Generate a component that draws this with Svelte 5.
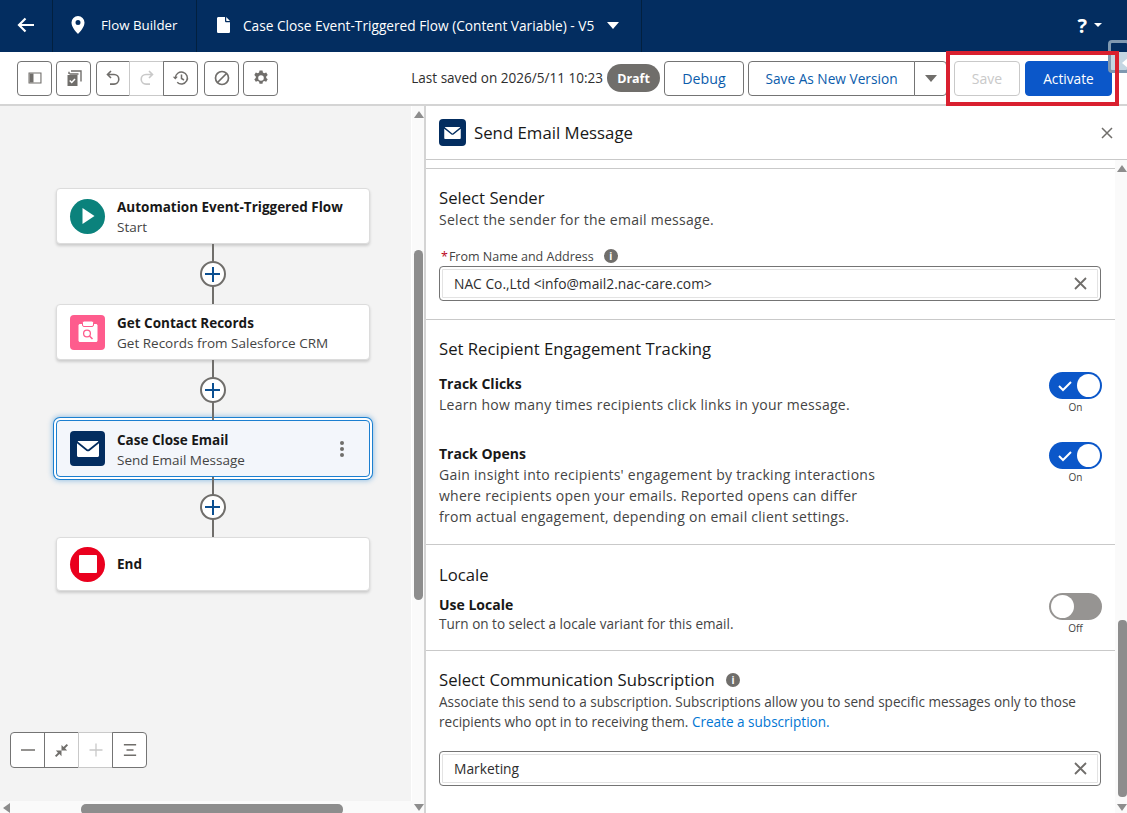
<script>
	const sections = {
		tracking: [
			{
				title: 'Track Clicks',
				lines: ['Learn how many times recipients click links in your message.']
			},
			{
				title: 'Track Opens',
				lines: [
					"Gain insight into recipients' engagement by tracking interactions",
					'where recipients open your emails. Reported opens can differ',
					'from actual engagement, depending on email client settings.'
				]
			}
		]
	};
</script>

<div class="page">
	<header class="topbar">
		<div class="cell back">
			<svg width="20" height="20" viewBox="0 0 20 20"><path d="M18 10H3M9.500 3.500 3 10l6.500 6.500" fill="none" stroke="#fff" stroke-width="2.200" /></svg>
		</div>
		<div class="cell builder">
			<svg width="14" height="18" viewBox="0 0 14 18"><path fill="#fff" fill-rule="evenodd" d="M7 0a6.500 6.500 0 0 0-6.500 6.500C.5 11 5 16 7 18c2-2 6.500-7 6.500-11.500A6.500 6.500 0 0 0 7 0Zm0 4a2.500 2.500 0 1 1 0 5 2.500 2.500 0 0 1 0-5Z" /></svg>
			<span>Flow Builder</span>
		</div>
		<div class="cell flowname">
			<svg width="13" height="16" viewBox="0 0 13 16"><path fill="#fff" d="M1.500 0H8v4c0 .8.600 1.300 1.300 1.300H13v9.400c0 .7-.6 1.300-1.300 1.300H1.500C.7 16 0 15.400 0 14.700V1.300C0 .6.700 0 1.500 0ZM9.200 0 13 4H9.700c-.3 0-.5-.2-.5-.5Z" /></svg>
			<span>Case Close Event-Triggered Flow (Content Variable) - V5</span>
			<i class="caret"></i>
		</div>
		<div class="help">
			<span>?</span>
			<i class="caret small"></i>
		</div>
	</header>

	<div class="toolbar">
		<div class="tools">
			<button class="tool">
				<svg width="16" height="16" viewBox="0 0 16 16"><path fill="#706e6b" d="M1.500 2.500h13v11h-13Zm1 1v9h10.900v-9Z" /><path fill="#706e6b" d="M2.500 3.500h4v9h-4z" /></svg>
			</button>
			<button class="tool">
				<svg width="20" height="20" viewBox="0 0 20 20"><path fill="none" stroke="#706e6b" stroke-width="1.400" d="M7 3h10v10.500" /><path fill="none" stroke="#706e6b" stroke-width="1.400" d="M5 6V3.800M14.500 6h-9" /><path fill="#706e6b" d="M3.500 7h10v11h-10z" /><path fill="none" stroke="#fff" stroke-width="1.500" d="m5.700 12.500 2 2 3.300-3.600" /></svg>
			</button>
			<div class="group">
				<button class="tool">
					<svg width="18" height="18" viewBox="0 0 18 18"><path fill="none" stroke="#706e6b" stroke-width="1.600" d="M7 2 3.500 5.500 7 9M3.500 5.500H10a4.800 4.800 0 0 1 0 9.600H6" /></svg>
				</button>
				<button class="tool off">
					<svg width="18" height="18" viewBox="0 0 18 18"><path fill="none" stroke="#c9c9c9" stroke-width="1.600" d="M11 2l3.500 3.500L11 9M14.500 5.500H8a4.800 4.800 0 0 0 0 9.600h4" /></svg>
				</button>
				<button class="tool">
					<svg width="18" height="18" viewBox="0 0 18 18"><path fill="none" stroke="#706e6b" stroke-width="1.500" d="M3.400 9a6 6 0 1 1 1.800 4.300M9.500 5.500v4l2.500 1.500" /><path fill="#706e6b" d="M.8 7.800h5L3.300 10.600Z" /></svg>
				</button>
			</div>
			<button class="tool">
				<svg width="18" height="18" viewBox="0 0 18 18"><circle cx="9" cy="9" r="6.500" fill="none" stroke="#706e6b" stroke-width="1.700" /><path stroke="#706e6b" stroke-width="1.700" d="M13.500 4.500l-9 9" /></svg>
			</button>
			<button class="tool">
				<svg width="18" height="18" viewBox="0 0 18 18"><path fill="#706e6b" fill-rule="evenodd" d="M7.500 1.500h3l.4 2 1.300.7 2-.7 1.500 2.600-1.500 1.300v1.500l1.500 1.300-1.500 2.600-2-.7-1.300.7-.4 2h-3l-.4-2-1.300-.7-2 .7-1.500-2.600 1.500-1.300V7.400L2.300 6.100l1.500-2.600 2 .7 1.300-.7ZM9 6.200a2.800 2.800 0 1 0 0 5.600 2.800 2.800 0 0 0 0-5.600Z" /></svg>
			</button>
		</div>

		<div class="spacer"></div>

		<span class="saved">Last saved on 2026/5/11 10:23</span>
		<span class="draft">Draft</span>
		<button class="btn debug">Debug</button>
		<div class="split">
			<button class="btn saveas">Save As New Version</button>
			<button class="btn more"><i class="caret grey"></i></button>
		</div>
		<div class="actions">
			<button class="btn save">Save</button>
			<button class="btn activate">Activate</button>
		</div>
	</div>

	<div class="body">
		<div class="canvas-wrap">
			<div class="canvas">
				<div class="node">
					<span class="ic round green"><svg width="14" height="18" viewBox="0 0 14 18"><path fill="#fff" d="M1.500 1l12 8-12 8Z" /></svg></span>
					<div class="txt">
						<b>Automation Event-Triggered Flow</b>
						<small>Start</small>
					</div>
				</div>
				<div class="link"><span class="plus"></span></div>
				<div class="node">
					<span class="ic pink">
						<svg width="22" height="24" viewBox="0 0 22 24"><path fill="#fff" d="M3 4h16c.8 0 1.500.7 1.500 1.500v15c0 .8-.7 1.500-1.500 1.500H3c-.8 0-1.500-.7-1.500-1.500v-15C1.500 4.700 2.200 4 3 4Z" /><rect x="5.500" y="1" width="11" height="5.500" rx="1.500" fill="#fff" stroke="#fe5c8d" stroke-width="1" /><circle cx="10" cy="13.500" r="3.400" fill="none" stroke="#fe5c8d" stroke-width="1.300" /><path stroke="#fe5c8d" stroke-width="1.500" d="m12.500 16 3 3" /></svg>
					</span>
					<div class="txt">
						<b>Get Contact Records</b>
						<small>Get Records from Salesforce CRM</small>
					</div>
				</div>
				<div class="link"><span class="plus"></span></div>
				<div class="node selected">
					<span class="ic navy">
						<svg width="22" height="16" viewBox="0 0 22 16"><path fill="#fff" d="M1.500 0h19c.4 0 .7.200.8.400L11.600 8.300c-.4.300-.9.300-1.300 0L.7.400C.8.200 1.100 0 1.500 0ZM0 2.300l9.600 7.600c.8.600 2 .6 2.800 0L22 2.300v12.200c0 .8-.7 1.500-1.500 1.500h-19C.7 16 0 15.300 0 14.500Z" /></svg>
					</span>
					<div class="txt">
						<b>Case Close Email</b>
						<small>Send Email Message</small>
					</div>
					<span class="dots"><i></i><i></i><i></i></span>
				</div>
				<div class="link"><span class="plus"></span></div>
				<div class="node end">
					<span class="ic round red"><span class="stop"></span></span>
					<div class="txt"><b>End</b></div>
				</div>
			</div>

			<div class="zoomer">
				<button><svg width="16" height="16" viewBox="0 0 16 16"><path stroke="#706e6b" stroke-width="1.500" d="M1 8h14" /></svg></button>
				<button><svg width="15" height="15" viewBox="0 0 16 16"><path fill="#706e6b" d="M2.500 15 1 13.500 4.200 10.300 2 8h6v6l-2.200-2.200ZM13.500 1 15 2.500 11.800 5.700 14 8H8V2l2.200 2.200Z" /></svg></button>
				<button class="off"><svg width="16" height="16" viewBox="0 0 16 16"><path stroke="#c9c9c9" stroke-width="1.300" d="M1.500 8h13M8 1.500v13" /></svg></button>
				<button><svg width="14" height="14" viewBox="0 0 16 16"><path stroke="#706e6b" stroke-width="1.700" d="M1 2h14M4 8h8M1 14h14" /></svg></button>
			</div>

			<div class="vbar"><i class="up"></i><span class="thumb"></span><i class="down"></i></div>
			<div class="hbar"><i class="left"></i><span class="thumb"></span></div>
		</div>

		<aside class="panel">
			<div class="panel-head">
				<span class="ic mini navy">
					<svg width="17" height="12" viewBox="0 0 22 16"><path fill="#fff" d="M1.500 0h19c.4 0 .7.200.8.400L11.600 8.300c-.4.300-.9.300-1.300 0L.7.400C.8.200 1.100 0 1.500 0ZM0 2.300l9.600 7.600c.8.600 2 .6 2.800 0L22 2.300v12.200c0 .8-.7 1.500-1.500 1.500h-19C.7 16 0 15.300 0 14.500Z" /></svg>
				</span>
				<h2>Send Email Message</h2>
				<svg class="close" width="12" height="12" viewBox="0 0 12 12"><path stroke="#706e6b" stroke-width="1.500" d="M1 1l10 10M11 1 1 11" /></svg>
			</div>

			<div class="panel-scroll">
				<div class="content">
					<section class="sender">
						<h3>Select Sender</h3>
						<p>Select the sender for the email message.</p>
						<label><em>*</em>From Name and Address <span class="info">i</span></label>
						<div class="field">
							<span>NAC Co.,Ltd &lt;info@mail2.nac-care.com&gt;</span>
							<svg width="13" height="13" viewBox="0 0 13 13"><path stroke="#706e6b" stroke-width="1.800" d="M1 1l11 11M12 1 1 12" /></svg>
						</div>
					</section>

					<section class="tracking">
						<h3>Set Recipient Engagement Tracking</h3>
						{#each sections.tracking as row}
							<div class="row">
								<div>
									<h4>{row.title}</h4>
									{#each row.lines as line}
										<p>{line}</p>
									{/each}
								</div>
								<div class="toggle-box">
									<span class="toggle on">
										<svg width="16" height="12" viewBox="0 0 16 12"><path fill="none" stroke="#fff" stroke-width="2" d="m2 6 4 4 8-8" /></svg>
										<i></i>
									</span>
									<small>On</small>
								</div>
							</div>
						{/each}
					</section>

					<section class="locale">
						<h3>Locale</h3>
						<div class="row">
							<div>
								<h4>Use Locale</h4>
								<p>Turn on to select a locale variant for this email.</p>
							</div>
							<div class="toggle-box">
								<span class="toggle"><i></i></span>
								<small>Off</small>
							</div>
						</div>
					</section>

					<section class="subscription">
						<h3>Select Communication Subscription <span class="info">i</span></h3>
						<p class="first">Associate this send to a subscription. Subscriptions allow you to send specific messages only to those</p>
						<p>recipients who opt in to receiving them. <a href="#sub">Create a subscription.</a></p>
						<div class="field wide">
							<span>Marketing</span>
							<svg width="13" height="13" viewBox="0 0 13 13"><path stroke="#706e6b" stroke-width="1.800" d="M1 1l11 11M12 1 1 12" /></svg>
						</div>
					</section>
				</div>
				<div class="pbar"><i class="up"></i><span class="thumb"></span><i class="down"></i></div>
			</div>
		</aside>
	</div>

	<div class="corner-tab"><i></i></div>
	<div class="highlight"></div>
</div>

<style>
	:global(body) {
		margin: 0;
		background: #fff;
		overflow: hidden;
	}

	.page {
		position: relative;
		width: 1127px;
		height: 813px;
		overflow: hidden;
		display: flex;
		flex-direction: column;
		font-family: 'Open Sans', 'Noto Sans', sans-serif;
		color: #181818;
		font-size: 13px;
	}

	button {
		font-family: inherit;
		padding: 0;
		margin: 0;
		background: #fff;
		cursor: pointer;
	}

	.topbar {
		height: 52px;
		flex: none;
		display: flex;
		align-items: stretch;
		background: #032d60;
		color: #fff;
	}

	.cell {
		display: flex;
		align-items: center;
		border-right: 1px solid #02203f;
		box-sizing: border-box;
		padding-bottom: 2px;
	}

	.back {
		width: 53px;
		padding-left: 16px;
	}

	.builder {
		width: 144px;
		padding-left: 18px;
		gap: 16px;
		font-size: 13.300px;
	}

	.flowname {
		width: 445px;
		padding-left: 20px;
		gap: 13px;
		font-size: 13.700px;
	}

	.caret {
		display: block;
		width: 0;
		height: 0;
		border-left: 6px solid transparent;
		border-right: 6px solid transparent;
		border-top: 7px solid #fff;
	}

	.caret.small {
		border-left-width: 4px;
		border-right-width: 4px;
		border-top-width: 4px;
		margin-left: 7px;
	}

	.caret.grey {
		border-top-color: #706e6b;
		border-left-width: 6px;
		border-right-width: 6px;
		border-top-width: 7px;
		margin: 0;
	}

	.help {
		margin-left: auto;
		display: flex;
		align-items: center;
		padding: 0 25px 2px 0;
		font-size: 20px;
		font-weight: 700;
	}

	.toolbar {
		height: 54px;
		flex: none;
		box-sizing: border-box;
		border-bottom: 2px solid #d4d4d4;
		display: flex;
		align-items: center;
		padding: 0 15px 0 17px;
		gap: 5px;
	}

	.tools {
		display: flex;
		gap: 4px;
	}

	.tool {
		width: 35px;
		height: 35px;
		border: 1px solid #747474;
		border-radius: 4px;
		display: flex;
		align-items: center;
		justify-content: center;
	}

	.group {
		display: flex;
		margin: 0 2px 0 1px;
	}

	.group .tool {
		border-radius: 0;
		margin-left: -1px;
	}

	.group .tool:first-child {
		width: 34px;
		margin-left: 0;
		border-radius: 4px 0 0 4px;
	}

	.group .tool:last-child {
		border-radius: 0 4px 4px 0;
	}

	.group .tool.off {
		border-color: #c9c9c9;
		border-right-color: #747474;
	}

	.spacer {
		flex: 1;
	}

	.saved {
		font-size: 13.550px;
		color: #2e2e2e;
		margin-right: -1px;
	}

	.draft {
		background: #706e6b;
		color: #fff;
		font-weight: 700;
		font-size: 12.500px;
		height: 28px;
		width: 53px;
		margin-right: -1px;
		border-radius: 14px;
		display: flex;
		align-items: center;
		justify-content: center;
	}

	.btn {
		height: 35px;
		border: 1px solid #747474;
		border-radius: 4px;
		font-size: 13.700px;
		color: #0b5cab;
		box-sizing: border-box;
	}

	.debug {
		width: 80px;
		font-size: 14.200px;
		margin-right: -1px;
	}

	.split {
		display: flex;
	}

	.saveas {
		width: 167px;
		border-radius: 4px 0 0 4px;
	}

	.more {
		width: 33px;
		margin-left: -1px;
		border-radius: 0 4px 4px 0;
		display: flex;
		align-items: center;
		justify-content: center;
	}

	.actions {
		display: flex;
		gap: 5px;
		margin-left: 2px;
	}

	.save {
		width: 66px;
		color: #c9c9c9;
		border-color: #c9c9c9;
		font-size: 14px;
	}

	.activate {
		width: 87px;
		background: #0b57c9;
		border-color: #0b57c9;
		color: #fff;
	}

	.body {
		flex: 1;
		min-height: 0;
		display: flex;
	}

	.canvas-wrap {
		position: relative;
		width: 426px;
		flex: none;
		box-sizing: border-box;
		border-right: 2px solid #d4d4d4;
		background: #fff;
	}

	.canvas {
		position: absolute;
		left: 0;
		top: 0;
		width: 411px;
		height: 695px;
		background: #f3f3f3;
		display: flex;
		flex-direction: column;
		padding: 82px 0 0 56px;
		box-sizing: border-box;
	}

	.node {
		width: 314px;
		height: 56px;
		flex: none;
		box-sizing: border-box;
		background: #fff;
		border: 1px solid #dcdcdc;
		border-radius: 4px;
		box-shadow: 0 2px 3px rgba(0, 0, 0, 0.16);
		display: flex;
		align-items: center;
		padding-left: 13px;
		gap: 12px;
	}

	.node.selected {
		height: 57px;
		background: #f3f6fb;
		border: 1px solid #1b7fd0;
		box-shadow: 0 0 0 2px #fff, 0 0 0 3px #1b7fd0, 0 0 5px 4px rgba(27, 127, 208, 0.4);
	}

	.node.end {
		height: 54px;
	}

	.ic {
		width: 35px;
		height: 35px;
		flex: none;
		border-radius: 4px;
		display: flex;
		align-items: center;
		justify-content: center;
	}

	.round {
		border-radius: 50%;
	}

	.green {
		background: #0b827c;
	}

	.pink {
		background: #fe5c8d;
	}

	.navy {
		background: #032d60;
	}

	.red {
		background: #ea001e;
	}

	.stop {
		width: 18px;
		height: 18px;
		background: #fff;
		border-radius: 1px;
	}

	.mini {
		width: 27px;
		height: 27px;
	}

	.txt {
		display: flex;
		flex-direction: column;
		gap: 1px;
		padding-top: 3px;
	}

	.end .txt {
		padding-top: 1px;
	}

	.txt b {
		font-size: 13.500px;
		line-height: 19px;
		color: #181818;
	}

	.txt small {
		font-size: 13.500px;
		line-height: 19px;
		color: #444;
	}

	.dots {
		margin-left: auto;
		margin-right: 25px;
		display: flex;
		flex-direction: column;
		gap: 2px;
	}

	.dots i {
		width: 4px;
		height: 4px;
		border-radius: 50%;
		background: #706e6b;
	}

	.link {
		position: relative;
		width: 313px;
		height: 60px;
		flex: none;
		display: flex;
		align-items: center;
		justify-content: center;
		background: linear-gradient(#706e6b, #706e6b) center / 2px 100% no-repeat;
	}

	.plus {
		width: 26px;
		height: 26px;
		box-sizing: border-box;
		background:
			linear-gradient(#0b4f91, #0b4f91) center / 15px 2px no-repeat,
			linear-gradient(#0b4f91, #0b4f91) center / 2px 15px no-repeat,
			#fff;
		border: 2px solid #706e6b;
		border-radius: 50%;
	}

	.zoomer {
		position: absolute;
		left: 10px;
		top: 626px;
		display: flex;
	}

	.zoomer button {
		width: 35px;
		height: 36px;
		margin-left: -1px;
		border: 1px solid #747474;
		display: flex;
		align-items: center;
		justify-content: center;
	}

	.zoomer button:first-child {
		margin-left: 0;
		border-radius: 4px 0 0 4px;
	}

	.zoomer button:last-child {
		border-radius: 0 4px 4px 0;
	}

	.zoomer button.off {
		border-color: #c9c9c9;
		border-right-color: #747474;
	}

	.vbar {
		position: absolute;
		left: 412px;
		top: 0;
		width: 12px;
		height: 707px;
		background: #fafafa;
	}

	.vbar .thumb {
		position: absolute;
		left: 2px;
		top: 144px;
		width: 9px;
		height: 350px;
		border-radius: 5px;
		background: #8d8d8d;
	}

	.vbar .up,
	.pbar .up {
		position: absolute;
		left: 2px;
		top: 5px;
		border-left: 5px solid transparent;
		border-right: 5px solid transparent;
		border-bottom: 7px solid #8d8d8d;
	}

	.vbar .down,
	.pbar .down {
		position: absolute;
		left: 2px;
		bottom: 2px;
		border-left: 5px solid transparent;
		border-right: 5px solid transparent;
		border-top: 7px solid #8d8d8d;
	}

	.hbar {
		position: absolute;
		left: 0;
		top: 695px;
		width: 412px;
		height: 12px;
		background: #fafafa;
	}

	.hbar .left {
		position: absolute;
		left: 3px;
		top: 2px;
		border-top: 5px solid transparent;
		border-bottom: 5px solid transparent;
		border-right: 7px solid #8d8d8d;
	}

	.hbar .thumb {
		position: absolute;
		left: 81px;
		top: 3px;
		width: 262px;
		height: 11px;
		border-radius: 5px;
		background: #8d8d8d;
	}

	.panel {
		flex: 1;
		min-width: 0;
		display: flex;
		flex-direction: column;
	}

	.panel-head {
		height: 54px;
		flex: none;
		box-sizing: border-box;
		border-bottom: 1px solid #c9c9c9;
		display: flex;
		align-items: center;
		padding: 0 14px 0 13px;
		gap: 8px;
	}

	.panel-head h2 {
		margin: 0;
		font-size: 16.800px;
		font-weight: 400;
		color: #181818;
	}

	.close {
		margin-left: auto;
	}

	.panel-scroll {
		position: relative;
		flex: 1;
		min-height: 0;
		padding-top: 8px;
	}

	.content {
		width: 689px;
	}

	section {
		box-sizing: border-box;
		border-top: 1px solid #c9c9c9;
		padding-left: 13px;
	}

	h3 {
		margin: 0;
		font-size: 16.700px;
		line-height: 22px;
		font-weight: 400;
		color: #181818;
	}

	h4 {
		margin: 0;
		font-size: 14px;
		line-height: 20px;
		font-weight: 700;
		color: #181818;
	}

	p {
		margin: 0;
		font-size: 13.550px;
		line-height: 21px;
		color: #444;
	}

	.sender p,
	.tracking p {
		font-size: 14px;
		letter-spacing: 0.27px;
	}

	.locale p {
		margin-top: -1px;
	}

	a {
		color: #0176d3;
		text-decoration: none;
	}

	em {
		color: #ba0517;
		font-style: normal;
		margin-right: 1px;
	}

	label {
		display: flex;
		align-items: center;
		font-size: 12.500px;
		color: #444;
		margin-top: 17px;
		height: 18px;
		padding-left: 2px;
	}

	.info {
		display: inline-flex;
		align-items: center;
		justify-content: center;
		width: 14px;
		height: 14px;
		border-radius: 50%;
		background: #706e6b;
		color: #fff;
		font-size: 10px;
		font-weight: 700;
		margin-left: 10px;
		vertical-align: 2px;
	}

	h3 .info {
		margin-left: 7px;
	}

	.field {
		box-sizing: border-box;
		width: 662px;
		height: 35px;
		margin-top: 1px;
		border: 1px solid #747474;
		border-radius: 4px;
		box-shadow: inset 0 0 0 2px #fff, inset 0 0 0 3px #e3e3e3;
		display: flex;
		align-items: center;
		justify-content: space-between;
		padding: 0 13px 0 14px;
		font-size: 13.800px;
		color: #2e2e2e;
	}

	.field.wide {
		margin-top: 19px;
	}

	.sender {
		height: 151px;
		padding-top: 18px;
	}

	.tracking {
		height: 225px;
		padding-top: 18px;
	}

	.locale {
		height: 106px;
		padding-top: 19px;
	}

	.subscription {
		padding-top: 18px;
	}

	.subscription p {
		line-height: 20px;
	}

	.subscription p.first {
		margin-top: 2px;
		line-height: 19px;
	}

	.row {
		display: flex;
		justify-content: space-between;
		padding-right: 13px;
		margin-top: 14px;
	}

	.locale .row {
		margin-top: 9px;
	}

	.tracking .row + .row {
		margin-top: 29px;
	}

	.toggle-box {
		display: flex;
		flex-direction: column;
		align-items: center;
		margin-top: -2px;
	}

	.toggle-box small {
		font-size: 10px;
		line-height: 14px;
		margin-top: 1px;
		color: #444;
	}

	.toggle {
		position: relative;
		box-sizing: border-box;
		width: 53px;
		height: 27px;
		border-radius: 14px;
		background: #969492;
		display: block;
	}

	.toggle i {
		position: absolute;
		left: 2px;
		top: 2px;
		width: 23px;
		height: 23px;
		border-radius: 50%;
		background: #fff;
	}

	.toggle.on {
		background: #0b57c9;
	}

	.toggle.on i {
		left: 28px;
	}

	.toggle svg {
		position: absolute;
		left: 8px;
		top: 8px;
	}

	.pbar {
		position: absolute;
		right: 0;
		top: 0;
		width: 12px;
		height: 100%;
		background: #fafafa;
	}

	.pbar .thumb {
		position: absolute;
		left: 3px;
		top: 460px;
		width: 9px;
		height: 177px;
		border-radius: 4px;
		background: #8d8d8d;
	}

	.highlight {
		position: absolute;
		left: 946px;
		top: 51px;
		width: 173px;
		height: 55px;
		box-sizing: border-box;
		border: 4px solid #d9202f;
		pointer-events: none;
	}

	.corner-tab {
		position: absolute;
		left: 1108px;
		top: 40px;
		width: 22px;
		height: 33px;
		box-sizing: border-box;
		border: 3px solid #7f98b0;
		border-radius: 4px;
		background: linear-gradient(#032d60 0 9px, #c4d6e2 9px);
	}

	.corner-tab i {
		position: absolute;
		left: 11px;
		top: 14px;
		border-top: 6px solid transparent;
		border-bottom: 6px solid transparent;
		border-right: 7px solid #fff;
	}
</style>
